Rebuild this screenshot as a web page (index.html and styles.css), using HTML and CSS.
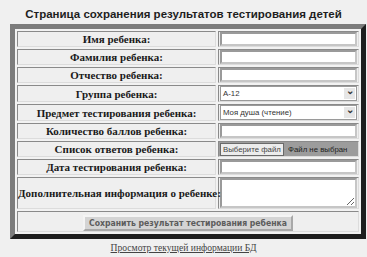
FILE: index.html
```html
<!DOCTYPE html>
<html lang="ru">
<head>
    <meta charset="UTF-8">
    <title>Сохранение результатов</title>
    <link rel="stylesheet" href="styles.css">
</head>
<body>
    <h2 class="title">Страница сохранения результатов тестирования детей</h2>

    <form class="result-form">
        <table class="form-table">
            <colgroup>
                <col class="label-col">
                <col class="value-col">
            </colgroup>
            <tr>
                <th>Имя ребенка:</th>
                <td><input type="text" class="field"></td>
            </tr>
            <tr>
                <th>Фамилия ребенка:</th>
                <td><input type="text" class="field"></td>
            </tr>
            <tr>
                <th>Отчество ребенка:</th>
                <td><input type="text" class="field"></td>
            </tr>
            <tr>
                <th>Группа ребенка:</th>
                <td>
                    <div class="select-box">
                        <span>А-12</span>
                        <span class="arrow">&#8964;</span>
                    </div>
                </td>
            </tr>
            <tr>
                <th>Предмет тестирования ребенка:</th>
                <td>
                    <div class="select-box">
                        <span>Моя душа (чтение)</span>
                        <span class="arrow">&#8964;</span>
                    </div>
                </td>
            </tr>
            <tr>
                <th>Количество баллов ребенка:</th>
                <td><input type="text" class="field"></td>
            </tr>
            <tr>
                <th>Список ответов ребенка:</th>
                <td class="file-cell">
                    <span class="file-btn">Выберите файл</span>
                    <span class="file-name">Файл не выбран</span>
                </td>
            </tr>
            <tr>
                <th>Дата тестирования ребенка:</th>
                <td><input type="text" class="field"></td>
            </tr>
            <tr class="tall-row">
                <th>Дополнительная информация о ребенке:</th>
                <td><textarea class="notes"></textarea></td>
            </tr>
            <tr>
                <td colspan="2" class="submit-cell">
                    <button type="button" class="save-btn">Сохранить результат тестирования ребенка</button>
                </td>
            </tr>
        </table>
    </form>

    <div class="footer-link"><a href="#">Просмотр текущей информации БД</a></div>
</body>
</html>
```

FILE: styles.css
```css
body {
    margin: 0;
    background: #f0f0f0;
    color: #1a1a1a;
    font-family: "Liberation Serif", "Times New Roman", serif;
}
.title {
    margin: 0;
    padding-top: 8px;
    height: 16px;
    font-family: "Liberation Sans", Arial, sans-serif;
    font-size: 11.5px;
    font-weight: bold;
    text-align: center;
    color: #1e1e1e;
}
.result-form {
    margin: 0 0 0 10px;
}
.form-table {
    width: 356px;
    table-layout: fixed;
    border-collapse: separate;
    border-spacing: 2px;
    border-style: solid;
    border-width: 5px;
    border-color: #7c7c7c #1e1e1e #1e1e1e #7c7c7c;
    background: #f2f2f2;
}
.label-col {
    width: 199px;
}
.value-col {
    width: 141px;
}
.form-table th,
.form-table td {
    height: 14px;
    padding: 0 1px;
    border: 1px solid;
    border-color: #8a8a8a #dcdcdc #dcdcdc #8a8a8a;
    background: #efefef;
}
.form-table th {
    padding: 0;
    font-size: 11px;
    font-weight: bold;
    white-space: nowrap;
}
.field {
    display: block;
    box-sizing: border-box;
    width: 100%;
    height: 14px;
    margin: 0;
    padding: 0 2px;
    border: 2px solid #9a9a9a;
    border-right-color: #c6c6c6;
    border-bottom-color: #c6c6c6;
    background: #fff;
}
.select-box {
    display: flex;
    align-items: center;
    justify-content: space-between;
    height: 13px;
    padding-left: 2px;
    border: 1px solid #9a9a9a;
    background: #fff;
    font-family: "Liberation Sans", Arial, sans-serif;
    font-size: 7.8px;
    color: #333;
}
.arrow {
    width: 11px;
    height: 11px;
    margin-right: 1px;
    background: #e6e6e6;
    font-size: 10px;
    line-height: 5px;
    text-align: center;
    font-weight: bold;
}
.form-table .file-cell {
    background: #9c9c9c;
    font-family: "Liberation Sans", Arial, sans-serif;
    font-size: 7.8px;
    white-space: nowrap;
    overflow: hidden;
}
.file-btn {
    display: inline-block;
    padding: 1px 2px;
    border: 1px solid #6a6a6a;
    background: #ececec;
    color: #444;
}
.file-name {
    margin-left: 2px;
    color: #222;
}
.tall-row th,
.tall-row td {
    height: 30px;
}
.notes {
    display: block;
    box-sizing: border-box;
    width: 100%;
    height: 30px;
    margin: 0;
    border: 2px solid #9a9a9a;
    border-right-color: #c6c6c6;
    border-bottom-color: #c6c6c6;
    background: #fff;
}
.form-table .submit-cell {
    height: 16px;
    text-align: center;
}
.save-btn {
    height: 16px;
    padding: 0 4px;
    border: 2px solid;
    border-color: #f4f4f4 #a8a8a8 #a8a8a8 #f4f4f4;
    background: #d4d4d4;
    color: #5c5c5c;
    font-family: "DejaVu Sans Condensed", "DejaVu Sans", sans-serif;
    font-stretch: condensed;
    font-size: 8.6px;
    font-weight: bold;
}
.footer-link {
    padding-top: 3px;
    text-align: center;
    font-size: 9.6px;
}
.footer-link a {
    color: #444;
}
```
